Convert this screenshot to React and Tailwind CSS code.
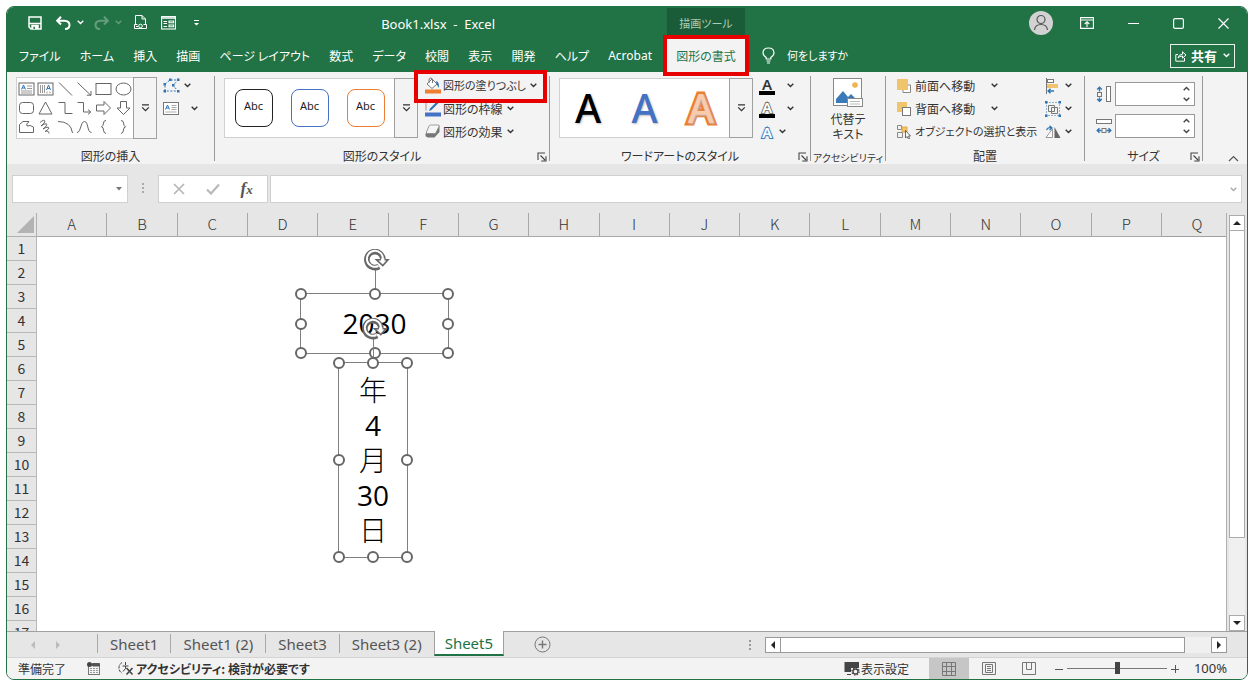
import { useState } from 'react';

const menuTabs = ['ファイル', 'ホーム', '挿入', '描画', 'ページ レイアウト', '数式', 'データ', '校閲', '表示', '開発', 'ヘルプ', 'Acrobat'];
const columns = 'ABCDEFGHIJKLMNOPQ'.split('');
const rows = Array.from({ length: 17 }, (_, i) => i + 1);
const sheets = ['Sheet1', 'Sheet1 (2)', 'Sheet3', 'Sheet3 (2)', 'Sheet5'];

const shapeStyles = [
  { name: '黒', className: 'border-[#222]' },
  { name: '青', className: 'border-[#4472c4]' },
  { name: 'オレンジ', className: 'border-[#ed7d31]' },
];

const wordArtStyles = [
  { name: '黒', className: 'text-black' },
  { name: '青', className: 'text-[#4472c4]' },
  { name: 'オレンジ', className: 'text-[#f8cbad] [-webkit-text-stroke:5px_#ed7d31] [paint-order:stroke_fill]' },
];

function Chevron({ className = '' }) {
  return (
    <svg width="7" height="5" viewBox="0 0 7 5" className={className} fill="none" stroke="currentColor" strokeWidth="1.4">
      <path d="M0.7 0.8 3.5 3.6 6.3 0.8" />
    </svg>
  );
}

function Triangle({ dir, className = '' }) {
  const paths = {
    up: 'M0 6 4 2 8 6z',
    down: 'M0 2 4 6 8 2z',
    left: 'M6 0 2 4 6 8z',
    right: 'M2 0 6 4 2 8z',
  };
  return (
    <svg width="8" height="8" viewBox="0 0 8 8" className={className} fill="currentColor">
      <path d={paths[dir]} />
    </svg>
  );
}

function MoreButton({ label }) {
  return (
    <button aria-label={label} className="w-6 border border-[#a0a0a0] bg-[#f3f3f3] flex items-center justify-center text-[#333]">
      <svg width="9" height="8" viewBox="0 0 9 8" fill="none" stroke="currentColor" strokeWidth="1.3">
        <path d="M1 0.8H8M1.2 3.4 4.5 6.6 7.8 3.4" />
      </svg>
    </button>
  );
}

function Launcher({ label }) {
  return (
    <button aria-label={label} className="absolute right-0.5 bottom-0.5 text-[#444]">
      <svg width="10" height="10" viewBox="0 0 10 10" fill="none" stroke="currentColor" strokeWidth="1.1">
        <path d="M1 8V1H8M3.5 3.5 8 8M9 4.2V9H4.2" />
      </svg>
    </button>
  );
}

function Group({ label, width, launcher, labelSize = 'text-xs', children }) {
  return (
    <section className="flex">
      <div className={`relative flex flex-col ${width}`}>
        <div className="h-[70px] flex items-start">{children}</div>
        <div className={`h-5 flex items-end justify-center whitespace-nowrap ${labelSize}`}>{label}</div>
        {launcher && <Launcher label={`${label}の詳細`} />}
      </div>
      <div className="w-px bg-[#999] mt-0.5 mb-[3px]" />
    </section>
  );
}

// Thumbnails of the basic shapes, six to a row
const shapeIcons = [
  ['テキスト ボックス', <><rect x="1" y="3" width="15" height="12" /><path d="M9 6h5M9 8.500h5M3 11h11M3 13h11" stroke="#9a9a9a" /><path d="M3.500 9.500 5.500 5 7.500 9.500M4.200 8h2.600" stroke="#2e75b6" /></>],
  ['縦書き', <><rect x="1" y="3" width="15" height="12" /><path d="M3.500 5v8M5.500 5v8M7.500 5v8M10 11.500v2M13 11.500v2" stroke="#9a9a9a" /><path d="M9.500 10 11.500 5 13.500 10M10.200 8.500h2.600" stroke="#2e75b6" /></>],
  ['直線', <path d="M2 2.500 15 15.500" />],
  ['矢印', <path d="M1.500 2.500 15 15.500M10.800 15.200H15V11" />],
  ['四角形', <rect x="1" y="3.500" width="15" height="11" />],
  ['楕円', <ellipse cx="8.500" cy="9" rx="7.500" ry="6" />],
  ['角丸四角形', <rect x="1.500" y="3.500" width="14" height="11" rx="3" />],
  ['三角形', <path d="M8.500 3 15 15H2z" />],
  ['コネクタ', <path d="M1.500 3.500H8V14.500H15.500" />],
  ['矢印コネクタ', <path d="M1.500 3.500H7.500V13H14.500M12 10.500 14.800 13 12 15.500" />],
  ['右矢印', <path d="M1.500 6H9V2.500L15.500 9 9 15.500V12H1.500z" />],
  ['下矢印', <path d="M5.500 2.500h6V9H15L8.500 15.500 2 9h3.500z" />],
  ['フリーフォーム', <path d="M1.500 14.500V6.500L5 3.500H11Q7.500 6.500 9 8 12 6.500 15.500 9V14.500z" />],
  ['スクリブル', <path d="M3 4.500Q7 1 8 3 8 5 4 8 9 4.500 10 6.500 9 9 6 11 11 8 12 10 11 12 8 13.500 12 12 12 15.500" />],
  ['円弧', <path d="M1 3.500Q14 3.500 15.500 15" />],
  ['曲線', <path d="M1 14.500C5 14.500 4.500 3.500 8.500 3.500S11 14.500 15.500 14.500" />],
  ['左中かっこ', <path d="M11 2.500Q8.500 2.500 8.500 5T6.500 9Q8.500 9 8.500 12T11 15.500" />],
  ['右中かっこ', <path d="M6 2.500Q8.500 2.500 8.500 5T10.500 9Q8.500 9 8.500 12T6 15.500" />],
];

function InsertShapes() {
  return (
    <Group label="図形の挿入" width="w-[207px]">
      <div className="mt-[3px] ml-[9px] flex h-[62px]">
        <div className="w-[117px] bg-white border border-r-0 border-[#d0d0d0] grid grid-cols-6 items-center justify-items-center py-0.5">
          {shapeIcons.map(([name, drawing]) => (
            <button key={name} aria-label={name}>
              <svg width="17" height="18" viewBox="0 0 17 18" fill="none" stroke="#666" strokeWidth="1">{drawing}</svg>
            </button>
          ))}
        </div>
        <MoreButton label="その他の図形" />
      </div>
      <div className="ml-1.5 flex flex-col">
        <button aria-label="図形の編集" className="h-[23px] flex items-center gap-1">
          <svg width="17" height="15" viewBox="0 0 17 15" fill="none">
            <path d="M2 13V6L7 2H15L10 7.500 15 13z" stroke="#2e75b6" strokeDasharray="2 1.500" />
            <path d="M0.500 12h2.500v2.500H0.500zM14 12h2.500v2.500H14zM14 0.500h2.500V3H14zM6 0.500h2.500V3H6zM0.500 5h2.500v2.500H0.500zM9 6h2.500v2.500H9z" fill="#2e75b6" />
          </svg>
          <Chevron />
        </button>
        <button aria-label="テキスト ボックスの描画" className="h-[23px] flex items-center gap-3">
          <svg width="16" height="13" viewBox="0 0 16 13" fill="none" stroke="#777">
            <rect x="0.500" y="0.500" width="15" height="12" fill="#fff" />
            <path d="M8.500 3.500h5M8.500 5.500h5M8.500 7.500h5M2.500 10h11" stroke="#aaa" />
            <path d="M2.500 7.500 4.500 3 6.500 7.500M3.200 6h2.600" stroke="#2e75b6" />
          </svg>
          <Chevron />
        </button>
      </div>
    </Group>
  );
}

function FillIcon() {
  return (
    <svg width="17" height="17" viewBox="0 0 17 17" fill="none">
      <path d="M8 2 13 7 8 11.500 3 7z" fill="#fff" stroke="#777" />
      <path d="M5 6V3Q5 1 6.700 1T8.500 3V6" stroke="#777" />
      <path d="M12 4Q15.500 5 15 11 13.500 9 12.500 7z" fill="#2e75b6" />
      <rect x="1" y="12.500" width="16" height="4" fill="#ed7d31" />
    </svg>
  );
}

function OutlineIcon() {
  return (
    <svg width="17" height="17" viewBox="0 0 17 17" fill="none">
      <path d="M8 2.500H2V10.500" stroke="#999" />
      <path d="M5 11 6 8.500 13 1.500 14.500 3 7.500 10z" fill="#2e75b6" />
      <rect x="1" y="12.500" width="16" height="4" fill="#4472c4" />
    </svg>
  );
}

function EffectsIcon() {
  return (
    <svg width="17" height="17" viewBox="0 0 17 17">
      <path d="M6 2h8q2 0 1.500 2v5l-5 5.500H4Q1 14 1.500 11z" fill="#777" />
      <path d="M6.500 2H14q1.500 0 1 1.500L12 9.500q-.5 1-1.500 1H3.500Q2 10.500 2.500 9L5 3Q5.500 2 6.500 2z" fill="#f5f5f5" stroke="#888" strokeWidth="0.800" />
    </svg>
  );
}

function ShapeStyles() {
  return (
    <Group label="図形のスタイル" width="w-[334px]" launcher>
      <div className="mt-1 ml-[9px] flex h-[60px]">
        <div className="w-[170px] bg-white border border-r-0 border-[#d0d0d0] flex items-center justify-center gap-[18px]">
          {shapeStyles.map((style) => (
            <button
              key={style.name}
              aria-label={`Abc ${style.name}`}
              className={`w-[38px] h-[38px] pb-1 rounded-lg border font-['Noto_Sans'] text-[11px] text-[#222] ${style.className}`}
            >
              Abc
            </button>
          ))}
        </div>
        <MoreButton label="その他のスタイル" />
      </div>
      <div className="ml-1.5 flex flex-col items-start">
        <button className="relative h-[23px] flex items-center gap-0.5 whitespace-nowrap text-[11px]">
          <FillIcon />
          図形の塗りつぶし
          <Chevron className="ml-0.5" />
          <span className="absolute -left-2.5 -right-2.5 -top-1 -bottom-1.5 border-4 border-[#e60000] pointer-events-none z-20" />
        </button>
        <button className="h-[23px] flex items-center gap-0.5 whitespace-nowrap">
          <OutlineIcon />
          図形の枠線
          <Chevron className="ml-0.5" />
        </button>
        <button className="h-[23px] flex items-center gap-0.5 whitespace-nowrap">
          <EffectsIcon />
          図形の効果
          <Chevron className="ml-0.5" />
        </button>
      </div>
    </Group>
  );
}

function WordArtStyles() {
  return (
    <Group label="ワードアートのスタイル" width="w-[260px]" launcher>
      <div className="mt-1 ml-[9px] flex h-[60px]">
        <div className="w-[170px] bg-white border border-r-0 border-[#d0d0d0] flex items-center justify-around">
          {wordArtStyles.map((style) => (
            <button
              key={style.name}
              aria-label={`A ${style.name}`}
              className={`font-['Noto_Sans'] font-medium text-[40px] leading-none [text-shadow:1px_1px_2px_#bbb] ${style.className}`}
            >
              A
            </button>
          ))}
        </div>
        <MoreButton label="その他のワードアート" />
      </div>
      <div className="ml-1.5 flex flex-col items-start">
        <button aria-label="文字の塗りつぶし" className="h-[23px] flex items-center gap-3">
          <span className="w-4 border-b-4 border-black font-['Noto_Sans'] font-semibold text-[15px] leading-[14px]">A</span>
          <Chevron />
        </button>
        <button aria-label="文字の輪郭" className="h-[23px] flex items-center gap-3">
          <span className="w-4 border-b-4 border-black font-['Noto_Sans'] font-semibold text-[15px] leading-[14px] text-white [-webkit-text-stroke:2px_#777] [paint-order:stroke_fill]">A</span>
          <Chevron />
        </button>
        <button aria-label="文字の効果" className="h-[23px] flex items-center gap-1">
          <span className="w-4 font-['Noto_Sans'] font-semibold text-[15px] leading-[14px] text-white [-webkit-text-stroke:2px_#2e75b6] [paint-order:stroke_fill] [text-shadow:0_0_3px_#6cb0f0]">A</span>
          <Chevron />
        </button>
      </div>
    </Group>
  );
}

function Accessibility() {
  return (
    <Group label="アクセシビリティ" width="w-[74px]" labelSize="text-[10px]">
      <button className="w-full flex flex-col items-center pt-1 leading-[15px]">
        <svg width="30" height="30" viewBox="0 0 30 30" fill="none" className="mb-[3px]">
          <rect x="0.500" y="0.500" width="28" height="27" fill="#fff" stroke="#888" />
          <circle cx="22" cy="7" r="2.800" fill="#f0b34f" />
          <path d="M3 25V21L10 13 15 19 18 16 24 22V25z" fill="#3a7ab8" />
          <rect x="14.500" y="20.500" width="15" height="8" fill="#fff" stroke="#888" />
          <path d="M17 23.500h10M17 26h10" stroke="#bbb" />
        </svg>
        <span>代替テ</span>
        <span>キスト</span>
      </button>
    </Group>
  );
}

function Arrange() {
  return (
    <Group label="配置" width="w-[198px]">
      <div className="ml-[11px] w-[146px] flex flex-col">
        <button className="h-[23px] flex items-center whitespace-nowrap">
          <svg width="14" height="14" viewBox="0 0 14 14" className="mr-1 shrink-0" fill="none">
            <path d="M10 6h3.500v7.500H6V10" stroke="#888" fill="#fff" />
            <rect x="0" y="0" width="11" height="11" fill="#f0c36d" />
          </svg>
          前面へ移動
          <Chevron className="ml-4" />
        </button>
        <button className="h-[23px] flex items-center whitespace-nowrap">
          <svg width="14" height="14" viewBox="0 0 14 14" className="mr-1 shrink-0">
            <rect x="0" y="0" width="10" height="10" fill="#f0c36d" />
            <rect x="5.500" y="5.500" width="8" height="8" fill="#fff" stroke="#777" />
          </svg>
          背面へ移動
          <Chevron className="ml-4" />
        </button>
        <button className="h-[23px] flex items-center whitespace-nowrap text-[11px]">
          <svg width="14" height="14" viewBox="0 0 14 14" className="mr-1 shrink-0" fill="none" stroke="#888">
            <path d="M0.500 0.500h4v4h-4zM0.500 7.500h5v5h-5z" />
            <path d="M5 2h5v5H5z" fill="#f0c36d" stroke="#e0a84a" />
            <path d="M8.500 5.500V13L10 11.500 11.500 14 12.500 13.500 11.500 11H13.500z" fill="#fff" stroke="#444" strokeWidth="0.800" />
          </svg>
          オブジェクトの選択と表示
        </button>
      </div>
      <div className="ml-0.5 flex flex-col">
        <button aria-label="配置" className="h-[23px] flex items-center gap-1">
          <svg width="16" height="16" viewBox="0 0 16 16" fill="none">
            <path d="M1.500 0V16" stroke="#777" />
            <rect x="2.500" y="1.500" width="6" height="3" fill="#fff" stroke="#777" />
            <rect x="2" y="6" width="11" height="4" fill="#f0c36d" />
            <path d="M9 13H3M5.500 10.800 3.200 13 5.500 15.200" stroke="#2e75b6" strokeWidth="1.500" />
          </svg>
          <Chevron />
        </button>
        <button aria-label="グループ化" className="h-[23px] flex items-center gap-1">
          <svg width="16" height="16" viewBox="0 0 16 16" fill="none">
            <path d="M1.500 1.500h13v13h-13z" stroke="#2e75b6" strokeDasharray="1 2" />
            <path d="M0 0h2.500v2.500H0zM13.500 0H16v2.500h-2.500zM0 13.500h2.500V16H0zM13.500 13.500H16V16h-2.500z" fill="#2e75b6" />
            <path d="M3.500 4.500h6v6h-6zM6.500 6.500h6v6h-6z" stroke="#777" />
          </svg>
          <Chevron />
        </button>
        <button aria-label="回転" className="h-[23px] flex items-center gap-1">
          <svg width="16" height="14" viewBox="0 0 16 14" fill="none">
            <path d="M7.500 4V12.500H1z" fill="#fff" stroke="#999" />
            <path d="M9.500 2V13H15.500z" fill="#666" />
            <path d="M1.500 5Q3 1.500 6.500 3M4.500 0.800 7 3 4.500 5" stroke="#2e75b6" strokeWidth="1.300" />
          </svg>
          <Chevron />
        </button>
      </div>
    </Group>
  );
}

function SizeField({ label, icon }) {
  return (
    <div className="flex items-center gap-[3px]">
      {icon}
      <div className="w-20 h-6 bg-white border border-[#999] flex">
        <input type="text" aria-label={label} className="min-w-0 flex-1 px-1 outline-none" />
        <div className="w-4 flex flex-col text-[#444]">
          <button aria-label={`${label}を増やす`} className="flex-1 flex items-center justify-center">
            <Chevron className="rotate-180" />
          </button>
          <button aria-label={`${label}を減らす`} className="flex-1 flex items-center justify-center">
            <Chevron />
          </button>
        </div>
      </div>
    </div>
  );
}

function Size() {
  return (
    <Group label="サイズ" width="w-[117px]" launcher>
      <div className="ml-[11px] mt-2 flex flex-col gap-2">
        <SizeField
          label="高さ"
          icon={
            <svg width="16" height="17" viewBox="0 0 16 17" fill="none">
              <rect x="10.500" y="0.500" width="4" height="15" fill="#fff" stroke="#777" />
              <path d="M3.500 5.500V1M1.200 3.500 3.500 1.200 5.800 3.500M3.500 11.500V16M1.200 13 3.500 15.300 5.800 13" stroke="#2e75b6" strokeWidth="1.400" />
              <rect x="1.500" y="6.500" width="4" height="4" stroke="#777" />
            </svg>
          }
        />
        <SizeField
          label="幅"
          icon={
            <svg width="16" height="17" viewBox="0 0 16 17" fill="none">
              <rect x="0.500" y="1.500" width="15" height="4" fill="#fff" stroke="#777" />
              <path d="M5.500 12.500H1M3.500 10.200 1.200 12.500 3.500 14.800M10.500 12.500H15M12.500 10.200 14.800 12.500 12.500 14.800" stroke="#2e75b6" strokeWidth="1.400" />
              <rect x="6" y="10.500" width="4" height="4" stroke="#777" />
            </svg>
          }
        />
      </div>
    </Group>
  );
}

function TitleBar() {
  return (
    <div className="h-8 flex items-center text-white">
      <div className="w-[660px] pl-[21px] pr-[172px] flex items-center">
        <button aria-label="上書き保存">
          <svg width="14" height="14" viewBox="0 0 14 14" fill="none" stroke="currentColor" strokeWidth="1.500">
            <path d="M1 1H13V13H3L1 11z" />
            <path d="M1 7.500H13" />
            <path d="M4 13V9.500H10V13" fill="currentColor" />
            <path d="M6.200 13V10.800" stroke="#217346" strokeWidth="1.500" />
          </svg>
        </button>
        <button aria-label="元に戻す" className="ml-3.5 flex items-center gap-1.5">
          <svg width="15" height="14" viewBox="0 0 15 14" fill="none" stroke="currentColor" strokeWidth="2">
            <path d="M5 0.800 1.200 4.800 5 8.500M1.500 4.700H8.500Q13.500 5 13.500 9T9 13" />
          </svg>
          <Chevron />
        </button>
        <button aria-label="やり直し" disabled className="ml-2.5 flex items-center gap-1.5 opacity-30">
          <svg width="15" height="14" viewBox="0 0 15 14" fill="none" stroke="currentColor" strokeWidth="2">
            <path d="M10 0.800 13.800 4.800 10 8.500M13.500 4.700H6.500Q1.500 5 1.500 9T6 13" />
          </svg>
          <Chevron />
        </button>
        <button aria-label="印刷プレビュー" className="ml-3">
          <svg width="13" height="15" viewBox="0 0 13 15" fill="none" stroke="currentColor">
            <path d="M1.500 9V0.500H8L11.500 4V9M8 0.500V4H11.500" />
            <path d="M0.500 9.500H3.500M9.500 9.500H12.500M0.500 13.500H12.500M0.500 9.500V13.500M12.500 9.500V13.500M2 11.500H4" />
            <circle cx="6.500" cy="11" r="1.800" />
          </svg>
        </button>
        <button aria-label="フォーム" className="ml-3.5">
          <svg width="15" height="14" viewBox="0 0 15 14" fill="none" stroke="currentColor" strokeWidth="1.100">
            <rect x="0.600" y="0.600" width="13.800" height="12.400" />
            <path d="M0.500 2H14.500" strokeWidth="1.600" />
            <path d="M2.500 5.500H6M2.500 7.500H6M2.500 10.500H6M8 5h4.500v1.800H8zM8 9h4.500v1.800H8z" />
          </svg>
        </button>
        <button aria-label="クイック アクセスのカスタマイズ" className="ml-[18px]">
          <svg width="5" height="6" viewBox="0 0 5 6" fill="currentColor">
            <path d="M0 0H5V1H0zM0 3H5L2.500 5.500z" />
          </svg>
        </button>
        <h1 className="ml-auto pt-1 text-[13px] font-['Noto_Sans'] whitespace-pre">{'Book1.xlsx  -  Excel'}</h1>
      </div>
      <div className="w-[78px] h-[30px] bg-[#1b5c38] text-[#a9cdb8] flex items-center justify-center whitespace-nowrap text-[11px]">描画ツール</div>
      <div className="ml-auto pr-[18px] flex items-center">
        <button aria-label="アカウント" className="w-6 h-6 rounded-full bg-[#d2d2d2] flex items-center justify-center">
          <svg width="16" height="18" viewBox="0 0 16 18" fill="none" stroke="#555" strokeWidth="1.200">
            <circle cx="8" cy="5.500" r="4" />
            <path d="M1.500 16Q2 10.500 8 10.500T14.500 16" />
          </svg>
        </button>
        <button aria-label="リボンの表示オプション" className="ml-[27px]">
          <svg width="14" height="12" viewBox="0 0 14 12" fill="none" stroke="currentColor" strokeWidth="1.100">
            <path d="M0.600 0.600H13.400V11.400H0.600zM0.600 3H13.400M7 10V5M4.700 7 7 4.800 9.300 7" />
          </svg>
        </button>
        <button aria-label="最小化" className="ml-[34px]">
          <svg width="11" height="11" viewBox="0 0 11 11" stroke="currentColor"><path d="M0 5.500H11" /></svg>
        </button>
        <button aria-label="最大化" className="ml-[34px]">
          <svg width="11" height="11" viewBox="0 0 11 11" fill="none" stroke="currentColor" strokeWidth="1.200"><rect x="0.600" y="0.600" width="9.800" height="9.800" rx="1.500" /></svg>
        </button>
        <button aria-label="閉じる" className="ml-[34px]">
          <svg width="11" height="11" viewBox="0 0 11 11" stroke="currentColor" strokeWidth="1.200"><path d="M0.500 0.500 10.500 10.500M10.500 0.500 0.500 10.500" /></svg>
        </button>
      </div>
    </div>
  );
}

function MenuBar() {
  return (
    <div className="h-[33px] flex items-center text-white whitespace-nowrap">
      <nav className="w-[660px] pl-3 pr-[15px] flex justify-between">
        {menuTabs.map((tab) => (
          <button key={tab} className={tab === 'Acrobat' ? "font-['Noto_Sans']" : ''}>{tab}</button>
        ))}
      </nav>
      <button className="relative z-10 w-[78px] h-full bg-[#f3f3f3] text-[#217346]">
        図形の書式
        <span className="absolute -inset-1 border-4 border-[#e60000]" />
      </button>
      <label htmlFor="tell-me" className="ml-[17px]">
        <svg width="13" height="17" viewBox="0 0 13 17" fill="none" stroke="currentColor" strokeWidth="1.200">
          <path d="M4.200 12V10.500Q1 8.500 1 5.800 1.200 1 6.500 1T12 5.800Q12 8.500 8.800 10.500V12zM4.500 14H8.500M5 16H8" />
        </svg>
      </label>
      <input id="tell-me" type="text" placeholder="何をしますか" className="ml-3 w-40 bg-transparent text-[11px] outline-none placeholder:text-white" />
      <button className="ml-auto mr-3 w-[65px] h-6 border border-white/90 flex items-center justify-center gap-1 text-[13px] font-bold">
        <svg width="12" height="12" viewBox="0 0 12 12" fill="none" stroke="currentColor">
          <path d="M3 4.500H0.800V11.200H9.500V8M3 8Q3.500 4.500 7.500 4.200V1.800L11 5 7.500 8.200V6Q4.500 6 3 8z" />
        </svg>
        共有
        <Chevron className="ml-0.5" />
      </button>
    </div>
  );
}

function FormulaBar() {
  return (
    <div className="pt-[11px] pb-[10px] pl-[5px] pr-[5px] flex items-center">
      <div className="w-[116px] h-7 bg-white border border-[#d0d0d0] flex items-center">
        <input type="text" aria-label="名前ボックス" className="min-w-0 flex-1 px-1 outline-none" />
        <button aria-label="名前の一覧" className="w-4 flex justify-center text-[#777]">
          <svg width="6" height="4" viewBox="0 0 6 4" fill="currentColor"><path d="M0 0H6L3 3.500z" /></svg>
        </button>
      </div>
      <svg width="30" height="12" viewBox="0 0 30 12" fill="#aaa"><path d="M14 0h2v2h-2zM14 4h2v2h-2zM14 8h2v2h-2z" /></svg>
      <div className="w-[110px] h-7 bg-white border border-[#d0d0d0] flex items-center justify-around px-1">
        <button aria-label="キャンセル">
          <svg width="12" height="12" viewBox="0 0 12 12" stroke="#b5b5b5" strokeWidth="1.600"><path d="M1 1 11 11M11 1 1 11" /></svg>
        </button>
        <button aria-label="入力">
          <svg width="14" height="12" viewBox="0 0 14 12" fill="none" stroke="#b9b9b9" strokeWidth="2.200"><path d="M1 6.500 5 10.500 13 1.500" /></svg>
        </button>
        <button aria-label="関数の挿入" className="font-['Liberation_Serif'] italic font-bold text-[17px] leading-5 text-[#555]">
          f<span className="text-[13px]">x</span>
        </button>
      </div>
      <div className="ml-[2px] flex-1 h-7 bg-white border border-[#d0d0d0] flex items-center">
        <input type="text" aria-label="数式バー" className="min-w-0 flex-1 px-2 outline-none" />
        <button aria-label="数式バーの展開" className="w-4 flex justify-center text-[#aaa]"><Chevron /></button>
      </div>
    </div>
  );
}

function Handle({ place }) {
  return <span className={`absolute w-3 h-3 -ml-1.5 -mt-1.5 rounded-full border-2 border-[#666] bg-white ${place}`} />;
}

function DrawingShape({ className, children }) {
  return (
    <div className={`absolute border border-[#808080] text-black ${className}`}>
      {children}
      <span className="absolute left-1/2 -top-6 h-6 w-px bg-[#808080]" />
      <svg width="28" height="22" viewBox="0 0 28 22" fill="none" className="absolute left-1/2 -ml-[11px] -top-[45px]">
        <path d="M15 17.500A8 8 0 1 1 18.900 10.500" stroke="#666" strokeWidth="5.600" />
        <path d="M14.400 17A8 8 0 1 1 18.900 10.500" stroke="#fff" strokeWidth="2" />
        <path d="M12.500 10.800H24L18.800 16.500z" fill="#fff" stroke="#666" strokeWidth="1.600" />
        <path d="M16.900 9.500H20.500V12H16.900z" fill="#fff" />
      </svg>
      <Handle place="left-0 top-0" />
      <Handle place="left-1/2 top-0" />
      <Handle place="left-full top-0" />
      <Handle place="left-0 top-1/2" />
      <Handle place="left-full top-1/2" />
      <Handle place="left-0 top-full" />
      <Handle place="left-1/2 top-full" />
      <Handle place="left-full top-full" />
    </div>
  );
}

function Worksheet() {
  return (
    <div className="relative flex-1 min-w-0 overflow-hidden border-r border-[#b0b0b0]">
      <table className="w-full table-fixed border-separate border-spacing-0 text-[#333]">
        <colgroup>
          <col className="w-[30px]" />
          {columns.map((col) => <col key={col} className={col === 'Q' ? 'w-16' : ''} />)}
        </colgroup>
        <thead>
          <tr className="h-6 bg-[#e6e6e6] text-[15px] leading-[22px]">
            <th aria-label="すべて選択" className="p-0 border-r border-b border-[#b0b0b0]">
              <svg width="17" height="17" viewBox="0 0 17 17" className="ml-auto mr-0.5" fill="#b3b3b3"><path d="M17 0V17H0z" /></svg>
            </th>
            {columns.map((col) => (
              <th key={col} scope="col" className={col === 'Q' ? 'p-0 pl-1.5 align-top font-light border-b border-[#a0a0a0]' : 'p-0 align-top font-light border-r border-b border-[#a8a8a8]'}>{col}</th>
            ))}
          </tr>
        </thead>
        <tbody>
          {rows.map((row) => (
            <tr key={row} className="h-6 text-sm leading-[22px]">
              <th scope="row" className="p-0 align-top font-normal bg-[#e6e6e6] border-r border-b border-[#b8b8b8]">{row}</th>
              <td colSpan={17} className="p-0 bg-white" />
            </tr>
          ))}
        </tbody>
      </table>
      <DrawingShape className="left-[293px] top-20 w-[149px] h-[61px] flex items-center justify-center font-['Open_Sans'] text-[28px]">
        2030
      </DrawingShape>
      <DrawingShape className="left-[331px] top-[149px] w-[70px] h-[196px] flex flex-col items-center pt-2.5 font-['Open_Sans','Noto_Sans_CJK_JP',sans-serif] text-[28px] leading-[35px]">
        <span className="font-light">年</span>
        <span>4</span>
        <span className="font-light">月</span>
        <span>30</span>
        <span className="font-light">日</span>
      </DrawingShape>
    </div>
  );
}

function VerticalScroll() {
  return (
    <div className="w-5 pt-0.5 pr-0.5 pl-0.5 flex flex-col text-[#222]">
      <button aria-label="上へスクロール" className="h-4 bg-white border border-[#ababab] flex items-center justify-center"><Triangle dir="up" /></button>
      <div className="flex-1 bg-[#f0f0f0]">
        <div className="h-4/5 bg-white border border-t-0 border-[#ababab]" />
      </div>
      <button aria-label="下へスクロール" className="h-4 bg-white border border-[#ababab] flex items-center justify-center"><Triangle dir="down" /></button>
    </div>
  );
}

function SheetTabs({ active, onSelect }) {
  return (
    <div className="h-[26px] flex border-t border-[#a0a0a0] font-['Noto_Sans'] text-[15px] leading-5 text-[#555] whitespace-nowrap">
      <div className="w-[90px] pl-[22px] flex items-center gap-[17px] text-[#bbb]">
        <button aria-label="前のシート"><Triangle dir="left" /></button>
        <button aria-label="次のシート"><Triangle dir="right" /></button>
      </div>
      {sheets.map((sheet) => (
        <button
          key={sheet}
          onClick={() => onSelect(sheet)}
          className={sheet === active
            ? '-mt-px mb-px px-2.5 bg-white border-x border-b-2 border-x-[#a0a0a0] border-b-[#217346] text-[#217346]'
            : 'mt-0.5 mb-1 px-3 pb-0.5 border-l border-[#a8a8a8]'}
        >
          {sheet}
        </button>
      ))}
      <button aria-label="新しいシート" className="ml-[30px]">
        <svg width="17" height="17" viewBox="0 0 17 17" fill="none" stroke="#777">
          <circle cx="8.500" cy="8.500" r="7.500" />
          <path d="M4.500 8.500H12.500M8.500 4.500V12.500" strokeWidth="1.400" />
        </svg>
      </button>
      <div className="ml-auto pr-5 flex items-center">
        <svg width="2" height="10" viewBox="0 0 2 10" fill="#999" className="mr-3.5"><path d="M0 0h2v2H0zM0 4h2v2H0zM0 8h2v2H0z" /></svg>
        <div className="w-[462px] h-4 bg-[#f0f0f0] flex text-[#222]">
          <button aria-label="左へスクロール" className="w-4 bg-white border border-[#999] flex items-center justify-center"><Triangle dir="left" /></button>
          <div className="w-[404px] bg-white border border-l-0 border-[#999]" />
          <button aria-label="右へスクロール" className="ml-auto w-4 bg-white border border-[#999] flex items-center justify-center"><Triangle dir="right" /></button>
        </div>
      </div>
    </div>
  );
}

function StatusBar() {
  const [zoom, setZoom] = useState(100);

  return (
    <div className="h-[22px] bg-[#f3f3f3] border-t border-[#d4d4d4] flex items-center pl-[11px] pr-5 whitespace-nowrap">
      <span>準備完了</span>
      <button aria-label="マクロの記録" className="ml-[21px]">
        <svg width="13" height="13" viewBox="0 0 13 13" fill="none" stroke="#777">
          <rect x="1.500" y="2.500" width="11" height="10" />
          <path d="M5.500 1.500h7v2.500h-7z" fill="#555" stroke="#555" />
          <path d="M3 6.500h8M3 8.500h8M3 10.500h8" strokeDasharray="2 1" stroke="#999" />
          <circle cx="2.500" cy="2.500" r="2.500" fill="#444" stroke="none" />
        </svg>
      </button>
      <button className="ml-[18px] flex items-center gap-0.5 font-bold">
        <svg width="16" height="15" viewBox="0 0 16 15" fill="none" stroke="#444">
          <path d="M4 1.500Q0.500 4 1 7.500T4 12" strokeDasharray="3 1" />
          <path d="M7.500 1V4M4.500 5H10.500M7.500 5V7.500L5 10.500" />
          <path d="M8.500 7 14.500 13.500M14.500 7 8.500 13.500" strokeWidth="1.600" />
        </svg>
        アクセシビリティ: 検討が必要です
      </button>
      <button className="ml-auto flex items-center gap-px">
        <svg width="16" height="15" viewBox="0 0 16 15" fill="none">
          <path d="M0.500 1H15V7H7V11H0.500zM3 13H7V14H3z" fill="#444" />
          <circle cx="11.500" cy="10.500" r="3.600" stroke="#444" strokeWidth="1.200" strokeDasharray="1.500 1.300" />
          <circle cx="11.500" cy="10.500" r="2.500" stroke="#444" strokeWidth="1.300" fill="#f3f3f3" />
        </svg>
        表示設定
      </button>
      <div className="ml-5 self-stretch flex">
        <button aria-label="標準" className="w-10 bg-[#c6c6c6] flex items-center justify-center">
          <svg width="14" height="14" viewBox="0 0 14 14" fill="none" stroke="#777"><path d="M0.500 0.500h13v13H0.500zM4.500 0.500v13M9.500 0.500v13M0.500 4.500h13M0.500 9.500h13" /></svg>
        </button>
        <button aria-label="ページ レイアウト" className="w-10 flex items-center justify-center">
          <svg width="14" height="13" viewBox="0 0 14 13" fill="none" stroke="#777"><path d="M0.500 0.500h13v12H0.500zM3.500 2.500h7v8h-7zM5 4.500h4M5 6.500h4M5 8.500h4" /></svg>
        </button>
        <button aria-label="改ページ プレビュー" className="w-10 flex items-center justify-center">
          <svg width="14" height="13" viewBox="0 0 14 13" fill="none" stroke="#777"><path d="M0.500 0.500h13v12H0.500zM4.500 0.500v7h5v-7M9.500 0.500v7" /></svg>
        </button>
      </div>
      <button aria-label="縮小" onClick={() => setZoom(Math.max(10, zoom - 10))} className="ml-1.5 w-2">
        <svg width="8" height="8" viewBox="0 0 8 8" stroke="#555"><path d="M0 4.500H8" /></svg>
      </button>
      <input
        type="range"
        aria-label="ズーム"
        min="10"
        max="190"
        value={zoom}
        onChange={(e) => setZoom(Number(e.target.value))}
        className="mx-1 w-[100px] h-4 appearance-none bg-transparent [&::-webkit-slider-runnable-track]:h-px [&::-webkit-slider-runnable-track]:bg-[#777] [&::-webkit-slider-thumb]:appearance-none [&::-webkit-slider-thumb]:w-[5px] [&::-webkit-slider-thumb]:h-3 [&::-webkit-slider-thumb]:-mt-1.5 [&::-webkit-slider-thumb]:bg-[#444]"
      />
      <button aria-label="拡大" onClick={() => setZoom(Math.min(190, zoom + 10))} className="w-2">
        <svg width="8" height="8" viewBox="0 0 8 8" stroke="#555"><path d="M0 4.500H8M4.500 0V8" /></svg>
      </button>
      <span className="ml-3.5 w-[34px] text-right font-['Noto_Sans'] text-[13px]">{zoom}%</span>
    </div>
  );
}

export default function App() {
  const [activeSheet, setActiveSheet] = useState('Sheet5');

  return (
    <div className="h-screen bg-white p-1.5 pr-[5px] font-['Noto_Sans_CJK_JP',sans-serif] text-xs text-[#333] [font-feature-settings:'palt']">
      <div className="h-full flex flex-col rounded-lg border border-[#217346] bg-[#e6e6e6] overflow-hidden">
        <header className="bg-[#217346]">
          <TitleBar />
          <MenuBar />
        </header>
        <div className="relative bg-[#f3f3f3] pt-0.5 flex">
          <InsertShapes />
          <ShapeStyles />
          <WordArtStyles />
          <Accessibility />
          <Arrange />
          <Size />
          <button aria-label="リボンを折りたたむ" className="ml-auto self-end mr-2 mb-0.5">
            <svg width="11" height="7" viewBox="0 0 11 7" fill="none" stroke="#555" strokeWidth="1.200"><path d="M1 6 5.500 1.500 10 6" /></svg>
          </button>
        </div>
        <FormulaBar />
        <main className="flex-1 min-h-0 flex">
          <Worksheet />
          <VerticalScroll />
        </main>
        <SheetTabs active={activeSheet} onSelect={setActiveSheet} />
        <StatusBar />
      </div>
    </div>
  );
}
